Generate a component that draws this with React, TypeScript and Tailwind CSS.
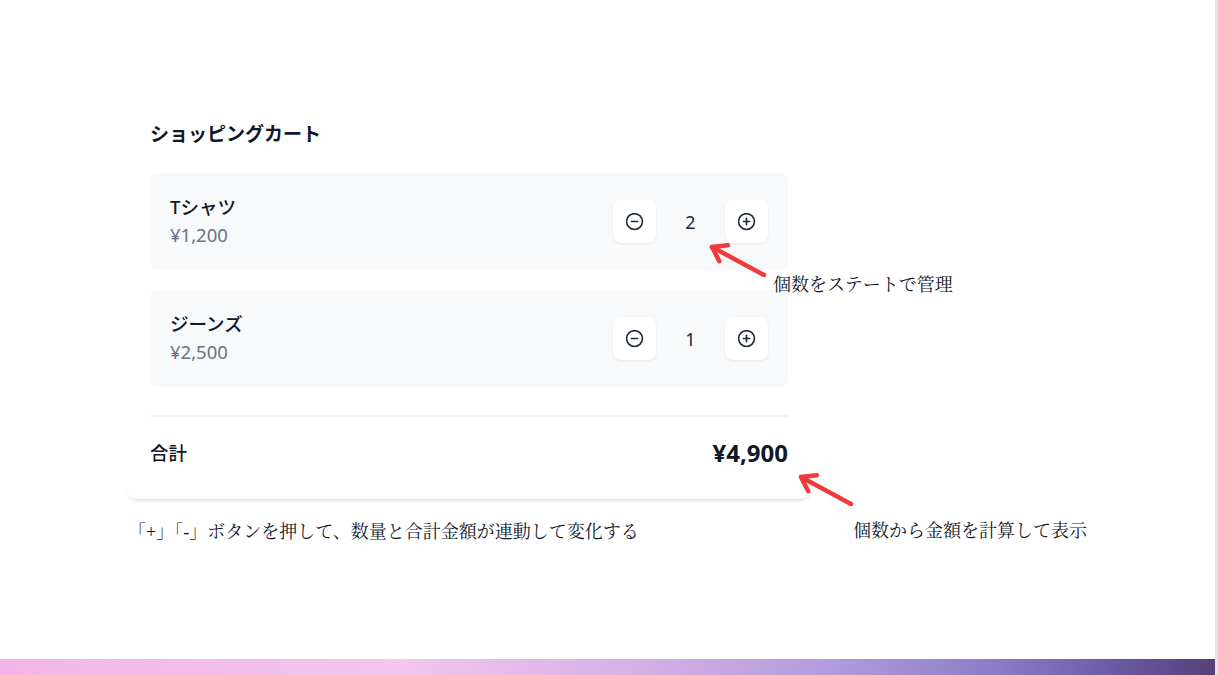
import { CircleMinus, CirclePlus } from "lucide-react";

const items = [
  { name: "Tシャツ", price: 1200, qty: 2 },
  { name: "ジーンズ", price: 2500, qty: 1 },
];

const yen = (n: number) => `¥${n.toLocaleString("ja-JP")}`;

function Arrow({ x1, y1, x2, y2 }: { x1: number; y1: number; x2: number; y2: number }) {
  // tail (x1,y1) -> tip (x2,y2)
  const a = Math.atan2(y1 - y2, x1 - x2);
  const len = 16;
  const s = 0.6;
  const h1 = [x2 + len * Math.cos(a + s), y2 + len * Math.sin(a + s)];
  const h2 = [x2 + len * Math.cos(a - s), y2 + len * Math.sin(a - s)];
  return (
    <g stroke="#f03a3c" strokeWidth={4.5} strokeLinecap="round" strokeLinejoin="round" fill="none">
      <line x1={x1} y1={y1} x2={x2} y2={y2} />
      <polyline points={`${h1[0]},${h1[1]} ${x2},${y2} ${h2[0]},${h2[1]}`} />
    </g>
  );
}

export default function App() {
  const total = items.reduce((sum, i) => sum + i.price * i.qty, 0);
  const serif = { fontFamily: '"Liberation Serif", "Noto Serif CJK JP", "Noto Sans CJK JP", serif' };

  return (
    <div
      className="relative flex h-[675px] w-[1218px] flex-col overflow-hidden bg-white"
      style={{ fontFamily: '"Noto Sans", "Noto Sans CJK JP", sans-serif' }}
    >
      <div className="flex flex-1">
        <div className="flex flex-1 flex-col pt-[95px] pl-[126px]">
          <div className="w-[686px] rounded-b-xl bg-white px-6 pb-[30px] shadow-[0_4px_4px_-3px_rgba(0,0,0,0.18)]">
            <h2 className="mt-[25px] mb-[25px] text-[19px] leading-7 font-bold text-gray-900">ショッピングカート</h2>
            <div className="flex flex-col gap-5">
              {items.map((item) => (
                <div
                  key={item.name}
                  className="flex h-[97px] items-center justify-between rounded-lg bg-[#f8f9fb] px-5"
                >
                  <div className="-mt-px flex flex-col">
                    <span className="text-[18.5px] leading-7 font-medium text-gray-900">{item.name}</span>
                    <span className="text-[18.5px] leading-7 text-gray-500">{yen(item.price)}</span>
                  </div>
                  <div className="flex items-center">
                    <button className="flex h-[43px] w-[43px] items-center justify-center rounded-lg bg-white text-gray-800 shadow-[0_1px_3px_rgba(0,0,0,0.08)]">
                      <CircleMinus size={19} strokeWidth={2} />
                    </button>
                    <span className="w-[69px] text-center text-lg text-gray-800">{item.qty}</span>
                    <button className="flex h-[43px] w-[43px] items-center justify-center rounded-lg bg-white text-gray-800 shadow-[0_1px_3px_rgba(0,0,0,0.08)]">
                      <CirclePlus size={19} strokeWidth={2} />
                    </button>
                  </div>
                </div>
              ))}
            </div>
            <div className="mt-7 flex items-center justify-between border-t-2 border-gray-100 pt-5">
              <span className="text-[18.5px] leading-8 font-medium text-gray-900">合計</span>
              <span className="text-2xl leading-8 font-bold text-gray-900">{yen(total)}</span>
            </div>
          </div>
          <p className="mt-[21px] ml-[2px] text-lg leading-6 text-gray-900" style={serif}>
            「+」「-」ボタンを押して、数量と合計金額が連動して変化する
          </p>
        </div>
        <div className="flex w-[3px] bg-[#e4e4ea]" />
      </div>

      <p className="absolute top-[273px] left-[773px] text-lg leading-6 text-gray-900" style={serif}>
        個数をステートで管理
      </p>
      <p className="absolute top-[519px] left-[853px] text-lg leading-6 text-gray-900" style={serif}>
        個数から金額を計算して表示
      </p>

      <svg className="pointer-events-none absolute inset-0" width={1218} height={675}>
        <Arrow x1={764} y1={275} x2={712} y2={247} />
        <Arrow x1={851} y1={504} x2={801} y2={477} />
      </svg>

      <div className="flex h-4">
        <div className="h-4 flex-1 bg-[linear-gradient(90deg,#f4b4e9_0%,#f2c6ee_33%,#d6b0e6_52%,#b29cde_68%,#8c7cc8_82%,#6a58a4_92%,#564079_100%)]" />
        <div className="w-[3px] bg-[#e4e4ea]" />
      </div>
    </div>
  );
}
